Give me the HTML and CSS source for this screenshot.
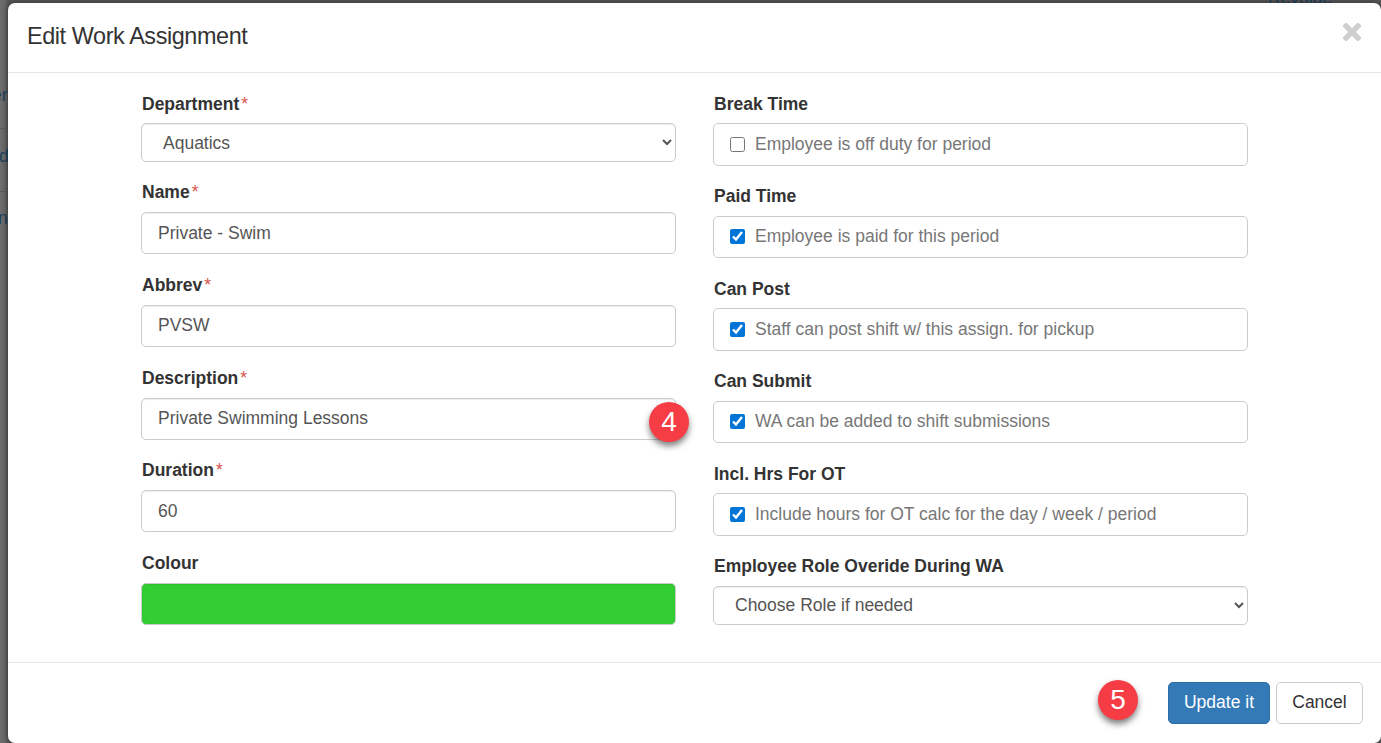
FILE: index.html
```html
<!DOCTYPE html>
<html lang="en">
<head>
<meta charset="utf-8">
<title>Edit Work Assignment</title>
<link rel="stylesheet" href="styles.css">
</head>
<body>
<div class="backdrop">
  <span class="bg-text bg-top">Revoide</span>
  <span class="bg-text bg-a">er</span>
  <span class="bg-text bg-b">d</span>
  <span class="bg-text bg-c">n</span>
  <i class="bg-rule bg-rule-a"></i>
  <i class="bg-rule bg-rule-b"></i>
</div>
<div class="modal">
  <header class="modal-header">
    <h4 class="modal-title">Edit Work Assignment</h4>
    <button class="close" type="button" aria-label="Close">
      <svg width="18" height="18" viewBox="0 0 18 18"><path d="M3 3 15 15M15 3 3 15" stroke="#cfcfcf" stroke-width="5.4" stroke-linecap="square" fill="none"/></svg>
    </button>
  </header>
  <div class="modal-body">
    <div class="col col-left">
      <div class="group g-first">
        <label class="lbl">Department<span class="req">*</span></label>
        <select class="ctl sel"><option>Aquatics</option></select>
      </div>
      <div class="group">
        <label class="lbl">Name<span class="req">*</span></label>
        <input class="ctl" type="text" value="Private - Swim">
      </div>
      <div class="group">
        <label class="lbl">Abbrev<span class="req">*</span></label>
        <input class="ctl" type="text" value="PVSW">
      </div>
      <div class="group">
        <label class="lbl">Description<span class="req">*</span></label>
        <input class="ctl" type="text" value="Private Swimming Lessons">
      </div>
      <div class="group">
        <label class="lbl">Duration<span class="req">*</span></label>
        <input class="ctl" type="text" value="60">
      </div>
      <div class="group">
        <label class="lbl">Colour</label>
        <div class="ctl swatch"></div>
      </div>
    </div>
    <div class="col">
      <div class="group">
        <label class="lbl">Break Time</label>
        <label class="ctl check"><input type="checkbox"><span>Employee is off duty for period</span></label>
      </div>
      <div class="group">
        <label class="lbl">Paid Time</label>
        <label class="ctl check"><input type="checkbox" checked><span>Employee is paid for this period</span></label>
      </div>
      <div class="group">
        <label class="lbl">Can Post</label>
        <label class="ctl check"><input type="checkbox" checked><span>Staff can post shift w/ this assign. for pickup</span></label>
      </div>
      <div class="group">
        <label class="lbl">Can Submit</label>
        <label class="ctl check"><input type="checkbox" checked><span>WA can be added to shift submissions</span></label>
      </div>
      <div class="group">
        <label class="lbl">Incl. Hrs For OT</label>
        <label class="ctl check"><input type="checkbox" checked><span>Include hours for OT calc for the day / week / period</span></label>
      </div>
      <div class="group">
        <label class="lbl">Employee Role Overide During WA</label>
        <select class="ctl sel"><option>Choose Role if needed</option></select>
      </div>
    </div>
  </div>
  <footer class="modal-footer">
    <button class="btn btn-primary" type="button">Update it</button>
    <button class="btn btn-default" type="button">Cancel</button>
  </footer>
</div>
<span class="badge badge-4">4</span>
<span class="badge badge-5">5</span>
</body>
</html>
```
FILE: styles.css
```css
* { box-sizing: border-box; }
html, body { height: 100%; }
body {
  margin: 0;
  height: 743px;
  overflow: hidden;
  padding: 3px 0 0 8px;
  background: #666;
  font-family: "Liberation Sans", Arial, sans-serif;
  color: #333;
  position: relative;
}
.backdrop { position: absolute; inset: 0; background: linear-gradient(90deg, #6e6e6e, #666 5px, #555 8px); }
.bg-text { position: absolute; font-size: 17.5px; color: #1d3f5e; line-height: 20px; }
.bg-top { left: 1268px; top: -12px; }
.bg-a { left: -8px; top: 85px; }
.bg-b { left: -1px; top: 146px; }
.bg-c { left: -2px; top: 208px; }
.bg-rule { position: absolute; left: 0; width: 8px; height: 1px; background: #5a5a5a; }
.bg-rule-a { top: 128px; }
.bg-rule-b { top: 191px; }
.modal {
  position: relative;
  width: 1373px;
  height: 740px;
  background: #fff;
  border-radius: 7px;
  box-shadow: 0 0 6px rgba(0,0,0,.4);
  display: flex;
  flex-direction: column;
}
.modal-header {
  height: 70px;
  flex: none;
  border-bottom: 1px solid #e5e5e5;
  padding: 20px 19px 0;
  display: flex;
  justify-content: space-between;
  align-items: flex-start;
}
.modal-title { margin: 0; font-size: 23.4px; letter-spacing: -.4px; font-weight: 400; line-height: 27px; color: #333; }
.close { border: 0; background: none; padding: 0; margin: 0 1px 0 0; line-height: 0; }
.modal-body {
  flex: none;
  height: 590px;
  padding: 17.6px 133px 0;
  display: grid;
  grid-template-columns: 535px 535px;
  column-gap: 37px;
  border-bottom: 1px solid #e5e5e5;
}
.col { display: flex; flex-direction: column; }
.group { height: 92.5px; flex: none; display: flex; flex-direction: column; }
.lbl { display: block; height: 32.6px; flex: none; font-size: 17.5px; font-weight: 700; line-height: 26px; padding-left: 1px; color: #333; }
.req { color: #d9534f; font-weight: 400; margin-left: 2px; }
.ctl {
  display: block;
  width: 100%;
  height: 42.5px;
  flex: none;
  border: 1px solid #ccc;
  border-radius: 5px;
  background: #fff;
  padding: 0 16px;
  font: 17.5px "Liberation Sans", Arial, sans-serif;
  color: #555;
  box-shadow: inset 0 1px 1px rgba(0,0,0,.075);
}
.sel { height: 39px; padding-left: 17px; }
.col-left .group { height: 92.7px; }
.col-left .lbl { height: 33px; }
.col-left .ctl { height: 42px; }
.col-left .g-first { height: 88.7px; }
.col-left .g-first .lbl { height: 32.6px; }
.col-left .g-first .ctl { height: 39px; }
.swatch { background: #32cd32; }
.check { display: flex; align-items: center; gap: 10px; color: #777; box-shadow: none; }
.check input { width: 15px; height: 15px; margin: 0; accent-color: #0075d8; flex: none; }
.modal-footer { flex: 1; display: flex; justify-content: flex-end; align-items: flex-start; gap: 6px; padding: 19px 18px 0 0; }
.btn { height: 41.5px; border-radius: 5px; border: 1px solid #ccc; font: 17.5px "Liberation Sans", Arial, sans-serif; padding: 0; }
.btn-primary { background: #337ab7; border-color: #2e6da4; color: #fff; width: 102px; }
.btn-default { background: #fff; color: #333; width: 87px; }
.badge {
  position: absolute;
  width: 40px;
  height: 40px;
  border-radius: 50%;
  background: #f63d45;
  color: #fff;
  font-size: 28px;
  line-height: 40px;
  text-align: center;
  box-shadow: 0 4px 6px rgba(0,0,0,.5);
}
.badge-4 { left: 649px; top: 402px; }
.badge-5 { left: 1098px; top: 680px; }
```
